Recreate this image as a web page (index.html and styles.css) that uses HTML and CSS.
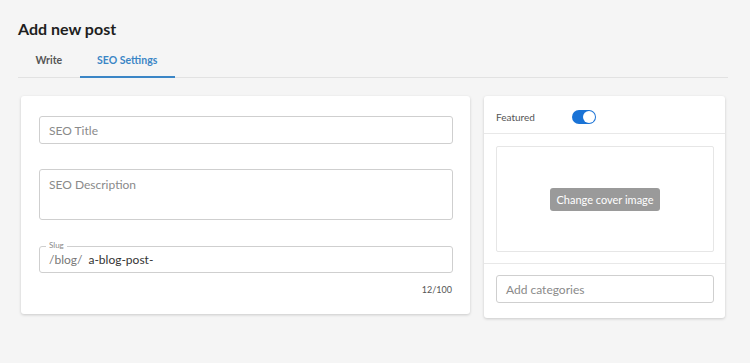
FILE: index.html
```html
<!DOCTYPE html>
<html>
<head>
<meta charset="utf-8">
<link rel="stylesheet" href="styles.css">
</head>
<body>
<div class="page">
  <h1 class="title">Add new post</h1>
  <div class="tabs">
    <div class="tab">Write</div>
    <div class="tab active">SEO Settings</div>
  </div>
  <div class="grid">
    <div class="card main">
      <div class="field"><span class="ph">SEO Title</span></div>
      <div class="field area"><span class="ph">SEO Description</span></div>
      <div class="field slug">
        <span class="legend">Slug</span>
        <span class="prefix">/blog/</span><span class="val">a-blog-post-</span>
      </div>
      <div class="counter">12/100</div>
    </div>
    <div class="card side">
      <div class="row featured">
        <span class="flabel">Featured</span>
        <span class="toggle"><span class="knob"></span></span>
      </div>
      <div class="row cover">
        <div class="coverbox"><span class="btn">Change cover image</span></div>
      </div>
      <div class="row cats">
        <div class="field small"><span class="ph">Add categories</span></div>
      </div>
    </div>
  </div>
</div>
</body>
</html>
```
FILE: styles.css
```css
* { box-sizing: border-box; }
html, body { margin: 0; padding: 0; }
body {
  background: #f5f5f5;
  font-family: Lato, "Noto Sans", sans-serif;
  color: #222;
  width: 750px;
  height: 363px;
  overflow: hidden;
}
.page { padding: 18px 22px 0 18px; }
.title {
  margin: 0;
  font-size: 16px;
  font-weight: 700;
  line-height: 22px;
  color: #1e1e1e;
}
.tabs {
  display: flex;
  border-bottom: 1px solid #e2e2e2;
  height: 38px;
}
.tab {
  padding: 13px 17.5px 0;
  font-size: 10.5px;
  font-weight: 700;
  color: #555;
  line-height: 14px;
  height: 38px;
}
.tab.active {
  color: #3b86c6;
  border-bottom: 2px solid #3b86c6;
}
.grid {
  display: grid;
  grid-template-columns: 449px 241px;
  column-gap: 14px;
  padding: 18px 3px 0 3px;
  align-items: start;
}
.card {
  background: #fff;
  border-radius: 3px;
  box-shadow: 0 1px 3px rgba(0,0,0,0.18);
}
.main { padding: 20px 17px 21px 18px; height: 218px; }
.field {
  position: relative;
  border: 1px solid #cfcfcf;
  border-radius: 3px;
  height: 28px;
  padding: 0 9px;
  display: flex;
  align-items: center;
  font-size: 12px;
}
.ph { color: #8a8a8a; }
.area {
  margin-top: 25px;
  height: 51px;
  align-items: flex-start;
  padding-top: 7px;
}
.slug { margin-top: 26px; height: 27px; }
.legend {
  position: absolute;
  left: 6px;
  top: -7px;
  background: #fff;
  padding: 0 3px;
  font-size: 8px;
  line-height: 10px;
  color: #888;
}
.prefix { color: #777; }
.val { color: #333; margin-left: 6px; }
.counter {
  text-align: right;
  font-size: 9px;
  color: #555;
  margin-top: 11px;
  padding-right: 1px;
}
.side { height: 222px; }
.row { padding: 0 12px; }
.row + .row { border-top: 1px solid #e8e8e8; }
.featured {
  height: 37px;
  display: flex;
  align-items: center;
  padding-top: 5px;
}
.flabel { font-size: 10px; color: #555; width: 76px; }
.toggle {
  width: 24px;
  height: 14px;
  border-radius: 7px;
  background: #1a73d6;
  position: relative;
}
.knob {
  position: absolute;
  right: 1px;
  top: 1px;
  width: 12px;
  height: 12px;
  border-radius: 50%;
  background: #fff;
}
.cover { padding-top: 12px; padding-bottom: 11px; padding-right: 11px; }
.coverbox {
  height: 106px;
  border: 1px solid #e6e6e6;
  border-radius: 2px;
  display: flex;
  align-items: center;
  justify-content: center;
}
.btn {
  background: #9a9a9a;
  color: #fff;
  font-size: 11px;
  border-radius: 3px;
  padding: 0 6px;
  height: 23px;
  line-height: 23px;
  width: 110px;
  text-align: center;
}
.cats { padding-top: 11px; padding-right: 11px; }
.small { height: 28px; }
```
